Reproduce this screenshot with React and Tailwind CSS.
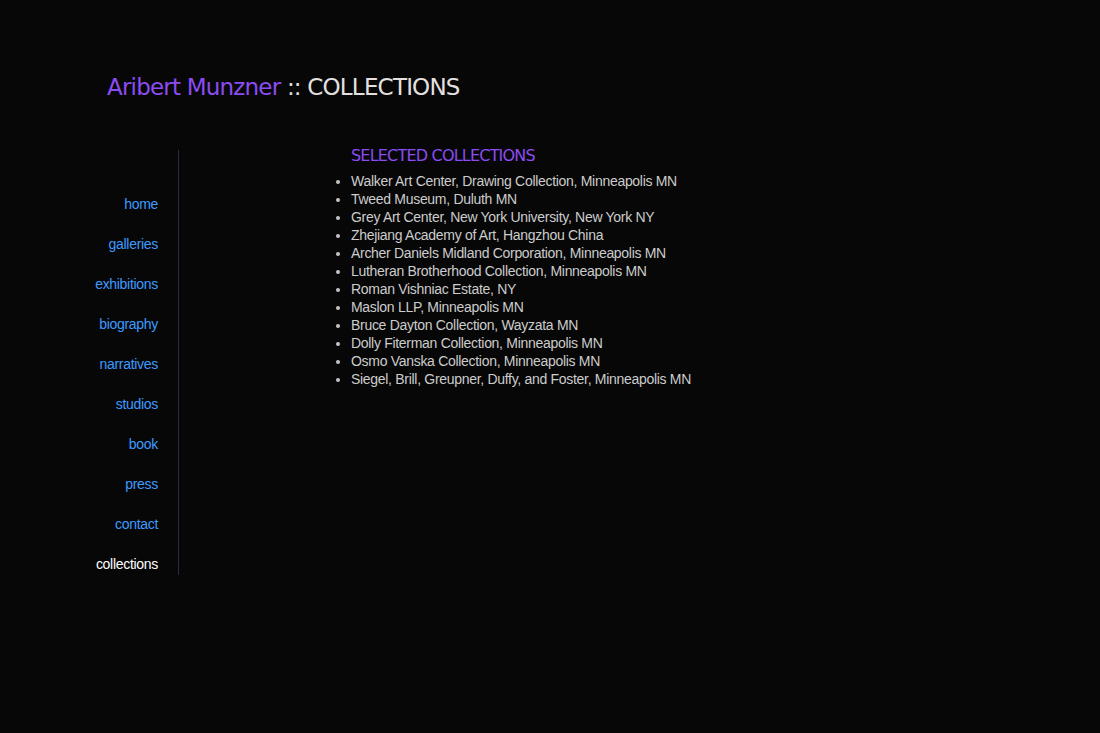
const navItems = [
  'home',
  'galleries',
  'exhibitions',
  'biography',
  'narratives',
  'studios',
  'book',
  'press',
  'contact',
  'collections',
];

const collections = [
  'Walker Art Center, Drawing Collection, Minneapolis MN',
  'Tweed Museum, Duluth MN',
  'Grey Art Center, New York University, New York NY',
  'Zhejiang Academy of Art, Hangzhou China',
  'Archer Daniels Midland Corporation, Minneapolis MN',
  'Lutheran Brotherhood Collection, Minneapolis MN',
  'Roman Vishniac Estate, NY',
  'Maslon LLP, Minneapolis MN',
  'Bruce Dayton Collection, Wayzata MN',
  'Dolly Fiterman Collection, Minneapolis MN',
  'Osmo Vanska Collection, Minneapolis MN',
  'Siegel, Brill, Greupner, Duffy, and Foster, Minneapolis MN',
];

const App = () => {
  return (
    <div className="min-h-screen w-full bg-[#070707] font-['Liberation_Sans',Arial,sans-serif]">
      <div className="pt-[72px] pl-[107px]">
        <h1 className="text-[23px] leading-[30px] font-['DejaVu_Sans',sans-serif] tracking-[-0.8px]">
          <span className="text-[#8b4cf2]">Aribert Munzner</span>
          <span className="text-[#e4e0e0]"> :: COLLECTIONS</span>
        </h1>
      </div>

      <div className="flex mt-[43px]">
        <nav className="w-[179px] mt-[5px] border-r border-[#2a2a44] pr-5 pt-[45px] pb-[2px] flex flex-col gap-[22px] text-right">
          {navItems.map((item) => (
            <a
              key={item}
              href="#"
              className={
                'text-[14px] leading-[18px] tracking-[-0.3px] ' +
                (item === 'collections' ? 'text-white' : 'text-[#3d9bff]')
              }
            >
              {item}
            </a>
          ))}
        </nav>

        <div className="pl-[172px]">
          <h2 className="mt-[1px] text-[16px] leading-[20px] text-[#8b4cf2] font-['DejaVu_Sans',sans-serif] tracking-[-0.8px]">
            SELECTED COLLECTIONS
          </h2>
          <ul className="mt-[6px] list-disc pl-0 text-[14px] leading-[18px] tracking-[-0.3px] text-[#cccccc]">
            {collections.map((c) => (
              <li key={c} className="ml-0 marker:text-[#c4c4c4]">
                {c}
              </li>
            ))}
          </ul>
        </div>
      </div>
    </div>
  );
};

export default App;
